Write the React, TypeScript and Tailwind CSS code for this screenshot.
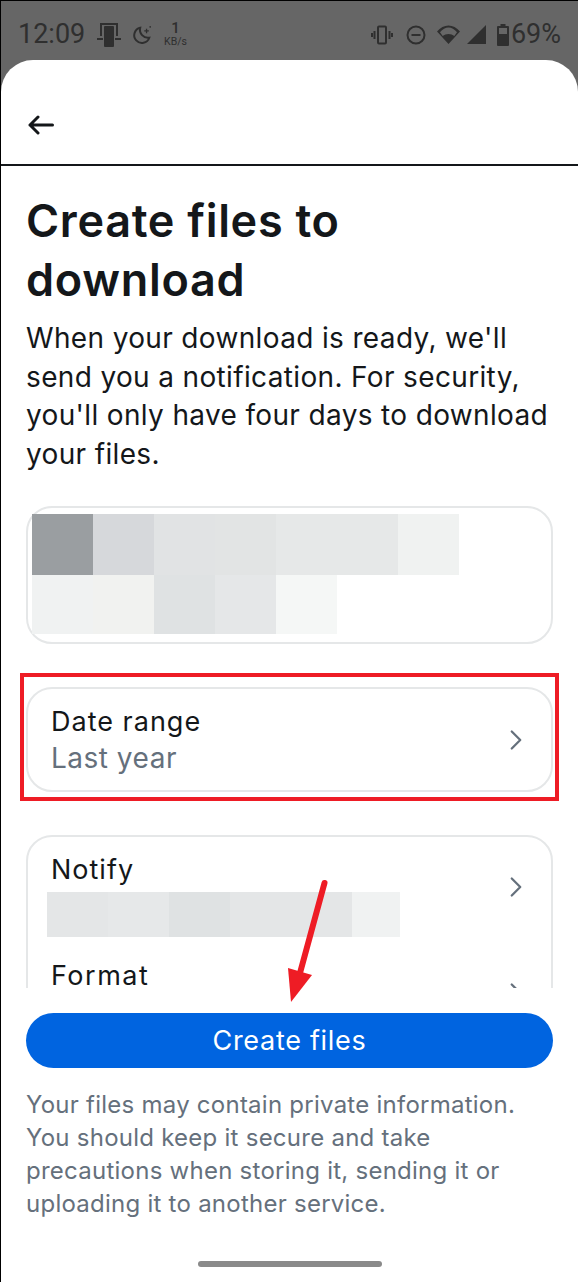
import { ChevronRight } from "lucide-react";

const topRow = ["bg-[#9a9ea1]", "bg-[#d6d8db]", "bg-[#e1e3e4]", "bg-[#e2e4e4]", "bg-[#e6e8e8]", "bg-[#e6e8e8]", "bg-[#f0f2f1]"];
const bottomRow = ["bg-[#f0f2f2]", "bg-[#f1f2f0]", "bg-[#dfe2e3]", "bg-[#e5e7e8]", "bg-[#f5f7f6]"];
const notifyRow = ["bg-[#e4e6e7]", "bg-[#e6e8e9]", "bg-[#dfe2e3]", "bg-[#e4e6e7]", "bg-[#e4e6e7]", "bg-[#f0f2f2]"];

function StatusBar() {
  return (
    <div className="h-[59px] flex items-center pl-[17px] pr-[17px] pt-[8px] text-[#2f2f2f] shrink-0">
      <span className="text-[27px] w-[70px] font-['Roboto',sans-serif]">12:09</span>
      <svg className="ml-[9px]" width="24" height="26" viewBox="0 0 24 26" fill="currentColor">
        <path d="M3 1h18v13h-2V3H5v11H3z" />
        <rect x="7" y="4" width="10" height="21" rx="1" />
        <rect x="0" y="16" width="6" height="2" />
        <rect x="18" y="16" width="6" height="2" />
      </svg>
      <svg className="ml-[11px]" width="20" height="20" viewBox="0 0 22 22" fill="none" stroke="currentColor" strokeWidth="2.200">
        <path d="M9 3a8.500 8.500 0 1 0 10 11A9 9 0 0 1 9 3z" />
        <path d="M16 4v5M13.500 6.500h5M20 1v2" strokeWidth="1.400" />
      </svg>
      <div className="ml-[11px] w-[25px] flex flex-col items-center font-['Roboto',sans-serif]">
        <span className="text-[15px] leading-[15px] font-medium">1</span>
        <span className="text-[10.500px] leading-[12px]">KB/s</span>
      </div>
      <div className="flex-1" />
      <svg width="22" height="20" viewBox="0 0 22 20" fill="none" stroke="currentColor" strokeWidth="2">
        <rect x="7" y="1.500" width="8" height="17" rx="1" />
        <path d="M3.500 6v8M18.500 6v8M1 8v4M21 8v4" />
      </svg>
      <svg className="ml-[13px]" width="20" height="20" viewBox="0 0 20 20" fill="none" stroke="currentColor" strokeWidth="2">
        <circle cx="10" cy="10" r="8.500" />
        <path d="M5.500 10h9" />
      </svg>
      <svg className="ml-[11px]" width="23" height="19" viewBox="0 0 23 19" fill="currentColor">
        <path fillRule="evenodd" d="M11.500 19 0 6.500C6.500-1.500 16.500-1.500 23 6.500zM11.500 9c2.200 0 4.300.7 5.800 2L20 7.200C15 .8 8 .8 3 7.200L5.700 11c1.500-1.300 3.600-2 5.800-2z" />
      </svg>
      <svg className="ml-[7px]" width="19" height="19" viewBox="0 0 19 19" fill="currentColor">
        <path d="M19 0v19H0z" />
      </svg>
      <svg className="ml-[11px]" width="12" height="22" viewBox="0 0 12 22" fill="currentColor">
        <path fillRule="evenodd" d="M3.500 0h5v2H11a1 1 0 0 1 1 1v18a1 1 0 0 1-1 1H1a1 1 0 0 1-1-1V3a1 1 0 0 1 1-1h2.500zM2 4v6h8V4z" />
      </svg>
      <span className="ml-[2px] text-[27px] font-['Roboto',sans-serif]">69%</span>
    </div>
  );
}

function ArrowNote() {
  return (
    <svg className="absolute left-[280px] top-[875px]" width="50" height="130" viewBox="280 875 50 130">
      <path d="M323.500 882 299 972" stroke="#ee1c25" strokeWidth="6" strokeLinecap="round" fill="none" />
      <path d="M287 967 311 974 290 1001z" fill="#ee1c25" />
    </svg>
  );
}

export default function App() {
  return (
    <div className="relative w-[578px] h-[1282px] flex flex-col overflow-hidden bg-[#666666] border-l border-t border-black font-['Inter',sans-serif]">
      <StatusBar />

      <div className="flex-1 min-h-0 flex flex-col bg-white rounded-t-[32px]">
        <div className="h-[106px] shrink-0 flex items-center pl-[27px] pt-[26px] border-b-2 border-[#14171a]">
          <svg width="26" height="20" viewBox="0 0 26 20" fill="none" stroke="#14171a" strokeWidth="3" strokeLinecap="round" strokeLinejoin="round">
            <path d="M24.500 10H2M10 2l-8 8 8 8" />
          </svg>
        </div>

        {/* scroll area, cut off by the footer */}
        <div className="h-[822px] shrink-0 overflow-hidden pt-[25px] pl-[25px] pr-[25px]">
          <h1 className="text-[45px] leading-[59px] font-semibold tracking-[0.7px] text-[#14171a]">
            Create files to
            <br />
            download
          </h1>
          <p className="mt-[10px] text-[28px] leading-[38.500px] tracking-[0.35px] text-[#14171a]">
            When your download is ready, we'll send you a notification. For security, you'll only have four days to download your files.
          </p>

          <div className="mt-[33px] h-[138px] rounded-[26px] border-2 border-[#e5e7e8] pl-[4px] pt-[6px]">
            <div className="flex h-[61px]">
              {topRow.map((c, i) => (
                <div key={i} className={`w-[61px] ${c}`} />
              ))}
            </div>
            <div className="flex h-[59px]">
              {bottomRow.map((c, i) => (
                <div key={i} className={`w-[61px] ${c}`} />
              ))}
            </div>
          </div>

          <div className="relative mt-[43px] h-[105px] rounded-[26px] border-2 border-[#e5e7e8] flex items-center justify-between pl-[23px] pr-[18px]">
            <div>
              <div className="text-[27px] leading-[36px] tracking-[1px] text-[#14171a]">Date range</div>
              <div className="text-[28px] leading-[36px] tracking-[0.5px] text-[#65707c]">Last year</div>
            </div>
            <ChevronRight className="w-[34px] h-[34px] text-[#65707c]" strokeWidth={1.6} />
            <div className="absolute -left-[8px] -right-[8px] -top-[16px] -bottom-[11px] border-4 border-[#ee1c25]" />
          </div>

          <div className="mt-[43px] h-[200px] rounded-[26px] border-2 border-[#e5e7e8] pl-[23px] pr-[18px] pt-[15px]">
            <div className="flex items-start justify-between h-[36px]">
              <span className="text-[27px] leading-[36px] tracking-[1px] text-[#14171a]">Notify</span>
              <ChevronRight className="w-[34px] h-[34px] mt-[18px] text-[#65707c]" strokeWidth={1.6} />
            </div>
            <div className="-ml-[4px] mt-[4px] flex h-[45px]">
              {notifyRow.map((c, i) => (
                <div key={i} className={`${i === 5 ? "w-[48px]" : "w-[61px]"} ${c}`} />
              ))}
            </div>
            <div className="flex items-start justify-between mt-[28px]">
              <span className="text-[27px] leading-[22px] tracking-[1.5px] text-[#14171a]">Format</span>
              <ChevronRight className="w-[34px] h-[34px] mt-[11px] text-[#65707c]" strokeWidth={1.6} />
            </div>
          </div>
        </div>

        <div className="flex-1 px-[25px] pt-[25px]">
          <button className="w-full h-[55px] pt-[2px] rounded-full bg-[#0064e0] text-white text-[27px] tracking-[0.7px]">Create files</button>
          <p className="mt-[20px] text-[24px] leading-[33px] tracking-[0.25px] text-[#65707c]">
            Your files may contain private information. You should keep it secure and take precautions when storing it, sending it or uploading it to another service.
          </p>
          <div className="mt-[41px] mx-auto w-[184px] h-[6px] rounded-full bg-[#8a8a8a]" />
        </div>
      </div>

      <ArrowNote />
    </div>
  );
}
